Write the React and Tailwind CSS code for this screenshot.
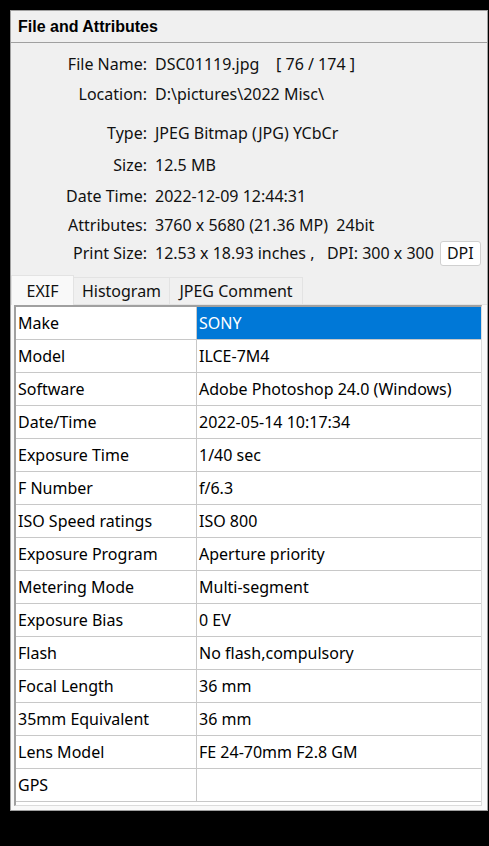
import React from 'react';

const info = [
  { label: 'File Name:', value: 'DSC01119.jpg    [ 76 / 174 ]', h: 'h-[30px]' },
  { label: 'Location:', value: 'D:\\pictures\\2022 Misc\\', h: 'h-[30px]', after: true },
  { label: 'Type:', value: 'JPEG Bitmap (JPG) YCbCr', h: 'h-[32px]' },
  { label: 'Size:', value: '12.5 MB', h: 'h-[32px]' },
  { label: 'Date Time:', value: '2022-12-09 12:44:31', h: 'h-[30px]' },
  { label: 'Attributes:', value: '3760 x 5680 (21.36 MP)  24bit', h: 'h-[28px]' },
];

const exif = [
  ['Make', 'SONY'],
  ['Model', 'ILCE-7M4'],
  ['Software', 'Adobe Photoshop 24.0 (Windows)'],
  ['Date/Time', '2022-05-14 10:17:34'],
  ['Exposure Time', '1/40 sec'],
  ['F Number', 'f/6.3'],
  ['ISO Speed ratings', 'ISO 800'],
  ['Exposure Program', 'Aperture priority'],
  ['Metering Mode', 'Multi-segment'],
  ['Exposure Bias', '0 EV'],
  ['Flash', 'No flash,compulsory'],
  ['Focal Length', '36 mm'],
  ['35mm Equivalent', '36 mm'],
  ['Lens Model', 'FE 24-70mm F2.8 GM'],
  ['GPS', ''],
];

const tabs = [
  { name: 'EXIF', w: 'w-[63px]' },
  { name: 'Histogram', w: 'w-[97px]' },
  { name: 'JPEG Comment', w: 'w-[134px]' },
];

const ui = { fontFamily: '"Noto Sans", "Open Sans", sans-serif' };

function InfoRow({ label, value, h, children }) {
  return (
    <div className={`flex items-center ${h}`}>
      <div className="w-[136px] text-right shrink-0">{label}</div>
      <div className="pl-[8px] whitespace-pre flex items-center">{value}{children}</div>
    </div>
  );
}

export default function App() {
  const [tab, setTab] = React.useState('EXIF');
  return (
    <div className="w-[489px] h-[846px] bg-black pt-[10px] pl-[10px]" style={ui}>
      <div className="w-[478px] h-[801px] bg-[#f0f0f0] border border-[#a0a0a0] flex flex-col text-[16px] text-[#111]">
        <div className="h-[32px] shrink-0 border-b border-[#a0a0a0] flex items-center pl-[7px]">
          <span className="font-bold text-[16px] text-black" style={{ fontFamily: '"Liberation Sans", Arial, sans-serif' }}>
            File and Attributes
          </span>
        </div>

        <div className="pt-[6px]">
          {info.map((r) => (
            <div key={r.label} className={r.after ? 'mb-[8px]' : ''}>
              <InfoRow {...r} />
            </div>
          ))}
          <InfoRow label="Print Size:" value="12.53 x 18.93 inches ,   DPI: 300 x 300" h="h-[28px]">
            <button className="ml-[6px] h-[25px] px-[6px] bg-white border border-[#d0d0d0] rounded-[3px] leading-none">
              DPI
            </button>
          </InfoRow>
        </div>

        <div className="mt-[7px] flex items-end h-[30px] shrink-0 relative z-10">
          {tabs.map((t) =>
            t.name === tab ? (
              <button
                key={t.name}
                onClick={() => setTab(t.name)}
                className={`h-[30px] ${t.w} bg-[#f9f9f9] border border-b-0 border-[#e3e3e3] -mb-px`}
              >
                {t.name}
              </button>
            ) : (
              <button
                key={t.name}
                onClick={() => setTab(t.name)}
                className={`h-[27px] ${t.w} bg-[#f0f0f0] border border-b-0 border-[#e3e3e3] -ml-px`}
              >
                {t.name}
              </button>
            )
          )}
        </div>

        <div className="flex-1 bg-[#f9f9f9] border-t border-[#e3e3e3] pl-[3px] pr-[5px] pb-[4px] flex">
          <div className="flex-1 bg-white border-l-2 border-t-2 border-[#a0a0a0] border-r border-b border-r-[#dcdcdc] border-b-[#dcdcdc]">
            {exif.map(([k, v], i) => (
              <div key={k} className="flex h-[33px] border-b border-[#c8c8c8]">
                <div className="w-[181px] shrink-0 border-r border-[#c8c8c8] flex items-center pl-[2px] text-black">
                  {k}
                </div>
                <div
                  className={`flex-1 flex items-center pl-[2px] ${
                    i === 0 ? 'bg-[#0078d7] text-white' : 'text-black'
                  }`}
                >
                  {v}
                </div>
              </div>
            ))}
          </div>
        </div>
      </div>
    </div>
  );
}
